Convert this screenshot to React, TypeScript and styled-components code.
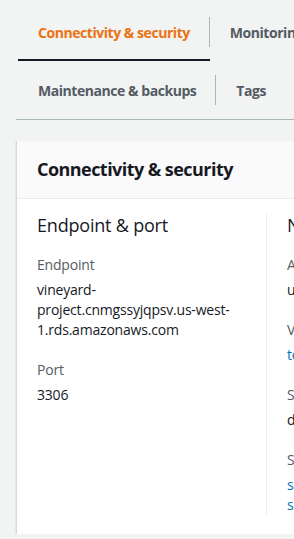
import React from 'react';
import styled, { createGlobalStyle, css } from 'styled-components';

const GlobalStyle = createGlobalStyle`
  html, body {
    margin: 0;
    padding: 0;
    background: #f2f3f3;
    overflow: hidden;
  }
  body {
    font-family: 'Open Sans', 'Noto Sans', Arial, sans-serif;
    color: #16191f;
  }
`;

const Page = styled.div`
  width: 640px;
  padding-left: 16px;
`;

const TabList = styled.div`
  display: flex;
  flex-wrap: wrap;
  width: 600px;
  padding: 3px 0 0 2px;
  border-bottom: 1px solid #aab7b8;
`;

const Tab = styled.div<{ $active?: boolean; $last?: boolean }>`
  position: relative;
  display: flex;
  align-items: center;
  height: 58px;
  padding: 0 20px;
  font-size: 14px;
  font-weight: 700;
  letter-spacing: -0.45px;
  color: ${(p) => (p.$active ? '#ec7211' : '#545b64')};
  white-space: nowrap;

  ${(p) =>
    !p.$last &&
    css`
      &::after {
        content: '';
        position: absolute;
        right: 0;
        top: 14px;
        width: 1px;
        height: 30px;
        background: #aab7b8;
      }
    `}

  ${(p) =>
    p.$active &&
    css`
      &::before {
        content: '';
        position: absolute;
        left: 0;
        right: 0;
        bottom: 0;
        height: 2px;
        background: #16191f;
      }
    `}
`;

const Card = styled.section`
  margin-top: 21px;
  width: 560px;
  background: #fff;
  border-left: 1px solid #d5dbdb;
  box-shadow: 0 1px 1px 0 rgba(0, 28, 36, 0.3), 1px 1px 1px 0 rgba(0, 28, 36, 0.15);
`;

const CardHeader = styled.div`
  background: #fafafa;
  border-bottom: 1px solid #eaeded;
  padding: 17px 20px 18px;
  font-size: 18px;
  line-height: 22px;
  font-weight: 700;
  letter-spacing: -0.55px;
`;

const CardBody = styled.div`
  display: grid;
  grid-template-columns: 249px 1fr;
  padding: 15px 0 19px;
`;

const Column = styled.div<{ $divider?: boolean }>`
  padding: 0 20px;
  border-left: ${(p) => (p.$divider ? '1px solid #eaeded' : 'none')};
`;

const ColumnTitle = styled.h3`
  margin: 0 0 19px;
  font-size: 18px;
  line-height: 22px;
  font-weight: 400;
  letter-spacing: -0.2px;
`;

const Field = styled.div`
  margin-bottom: 20px;

  &:last-child {
    margin-bottom: 0;
  }
`;

const Label = styled.div`
  font-size: 14px;
  line-height: 20px;
  color: #545b64;
  letter-spacing: -0.2px;
  margin-bottom: 5px;
`;

const Value = styled.div<{ $link?: boolean }>`
  font-size: 14px;
  line-height: 20px;
  letter-spacing: -0.2px;
  color: ${(p) => (p.$link ? '#0073bb' : '#16191f')};
  white-space: ${(p) => (p.$link ? 'nowrap' : 'normal')};
`;

const tabs = [
  'Connectivity & security',
  'Monitoring',
  'Logs & events',
  'Configuration',
  'Maintenance & backups',
  'Tags',
];

export default function App() {
  return (
    <>
      <GlobalStyle />
      <Page>
        <TabList>
          {tabs.map((t, i) => (
            <Tab key={t} $active={i === 0} $last={i === tabs.length - 1}>
              {t}
            </Tab>
          ))}
        </TabList>

        <Card>
          <CardHeader>Connectivity &amp; security</CardHeader>
          <CardBody>
            <Column>
              <ColumnTitle>Endpoint &amp; port</ColumnTitle>
              <Field>
                <Label>Endpoint</Label>
                <Value>vineyard-project.cnmgssyjqpsv.us-west-1.rds.amazonaws.com</Value>
              </Field>
              <Field>
                <Label>Port</Label>
                <Value>3306</Value>
              </Field>
            </Column>
            <Column $divider>
              <ColumnTitle>Networking</ColumnTitle>
              <Field>
                <Label>Availability zone</Label>
                <Value>us-west-1b</Value>
              </Field>
              <Field>
                <Label>VPC</Label>
                <Value $link>test-vpc (vpc-0c8f2e1a7d)</Value>
              </Field>
              <Field>
                <Label>Subnet group</Label>
                <Value>default-vpc-0c8f2e1a7d</Value>
              </Field>
              <Field>
                <Label>Subnets</Label>
                <Value $link>subnet-04a1e9b6c2</Value>
                <Value $link>subnet-0f7d3c58ab</Value>
              </Field>
            </Column>
          </CardBody>
        </Card>
      </Page>
    </>
  );
}
